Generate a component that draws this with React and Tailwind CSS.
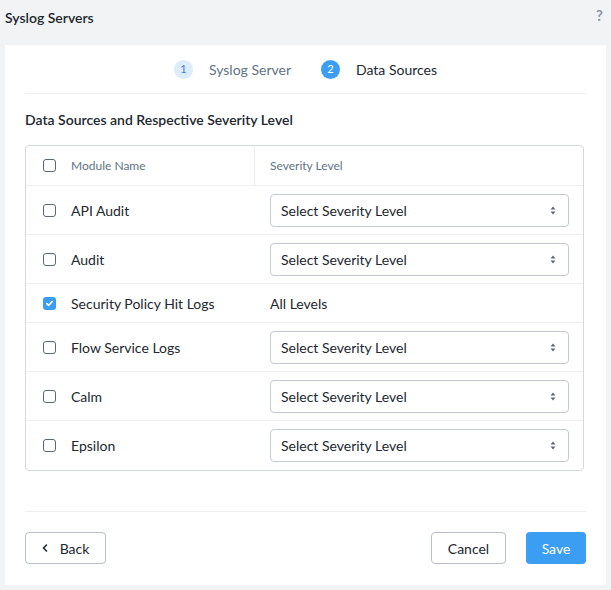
import { useState } from "react";

const rows = [
  { name: "API Audit", checked: false },
  { name: "Audit", checked: false },
  { name: "Security Policy Hit Logs", checked: true, all: true },
  { name: "Flow Service Logs", checked: false },
  { name: "Calm", checked: false },
  { name: "Epsilon", checked: false },
];

function Check({ checked }) {
  if (checked) {
    return (
      <span className="flex h-[13px] w-[13px] items-center justify-center rounded-[3px] bg-[#3b9ef3]">
        <svg width="9" height="9" viewBox="0 0 10 10" fill="none">
          <path d="M2 5.2l2 2 4-4.4" stroke="white" strokeWidth="1.8" strokeLinecap="round" strokeLinejoin="round" />
        </svg>
      </span>
    );
  }
  return <span className="block h-[13px] w-[13px] rounded-[3px] border border-[#5b6878] bg-white" />;
}

function SeveritySelect() {
  return (
    <div className="flex h-[33px] w-full items-center justify-between rounded-[4px] border border-[#c4cad3] bg-white pl-[10px] pr-[12px] text-[14px] text-[#22272e]">
      <span>Select Severity Level</span>
      <svg width="6" height="9" viewBox="0 0 6 9" fill="#5b6878">
        <path d="M3 0.5L5.5 3.5H0.5z" />
        <path d="M3 8.5L5.5 5.5H0.5z" />
      </svg>
    </div>
  );
}

export default function App() {
  const [items] = useState(rows);

  return (
    <div className="min-h-[590px] bg-[#f2f3f5] px-[5px] pb-[6px] font-['Lato','Liberation_Sans',sans-serif] text-[#22272e]">
      <div className="flex h-[45px] items-start justify-between">
        <h1 className="pt-[7px] text-[14px] font-semibold text-[#22272e]">Syslog Servers</h1>
        <span className="pt-[4px] pr-[3px] text-[15px] font-bold text-[#8a97a8]">?</span>
      </div>

      <div className="bg-white px-[20px]">
        <div className="flex h-[49px] items-center justify-center gap-[30px] border-b border-[#eceef1]">
          <div className="flex items-center gap-[16px]">
            <span className="flex h-[19px] w-[19px] items-center justify-center rounded-full bg-[#dcecfb] text-[11px] text-[#3b7fcf]">1</span>
            <span className="text-[14px] text-[#627386]">Syslog Server</span>
          </div>
          <div className="flex items-center gap-[16px]">
            <span className="flex h-[19px] w-[19px] items-center justify-center rounded-full bg-[#3b9ef3] text-[11px] text-white">2</span>
            <span className="text-[14px] text-[#22272e]">Data Sources</span>
          </div>
        </div>

        <h2 className="pt-[15px] pb-[15px] text-[14px] font-semibold text-[#22272e]">Data Sources and Respective Severity Level</h2>

        <div className="w-[559px] rounded-[4px] border border-[#d5d9df]">
          <div className="flex h-[40px] border-b border-[#eceef1] text-[12px] text-[#627386]">
            <div className="flex w-[229px] items-center gap-[15px] border-r border-[#eceef1] pl-[17px]">
              <Check checked={false} />
              <span>Module Name</span>
            </div>
            <div className="flex items-center pl-[15px]">Severity Level</div>
          </div>
          {items.map((r, i) => (
            <div
              key={r.name}
              className={`flex ${r.all ? "h-[39px]" : "h-[49px]"} ${i < items.length - 1 ? "border-b border-[#eceef1]" : ""} text-[14px]`}
            >
              <div className="flex w-[229px] items-center gap-[15px] pl-[17px]">
                <Check checked={r.checked} />
                <span>{r.name}</span>
              </div>
              <div className="flex flex-1 items-center pl-[15px] pr-[14px]">
                {r.all ? <span>All Levels</span> : <SeveritySelect />}
              </div>
            </div>
          ))}
        </div>

        <div className="mt-[40px] flex items-center justify-between border-t border-[#eceef1] pt-[20px] pb-[21px] text-[14px]">
          <button className="flex h-[32px] w-[81px] items-center justify-center gap-[12px] rounded-[4px] border border-[#b8c0cb] bg-white text-[#22272e]">
            <svg width="6" height="8" viewBox="0 0 6 8" fill="none">
              <path d="M4.5 1L1.5 4l3 3" stroke="#22272e" strokeWidth="1.6" strokeLinecap="round" strokeLinejoin="round" />
            </svg>
            <span>Back</span>
          </button>
          <div className="flex items-center gap-[20px]">
            <button className="h-[32px] w-[75px] rounded-[4px] border border-[#b8c0cb] bg-white text-[#22272e]">Cancel</button>
            <button className="h-[32px] w-[60px] rounded-[4px] bg-[#3b9ef3] text-white">Save</button>
          </div>
        </div>
      </div>
    </div>
  );
}
